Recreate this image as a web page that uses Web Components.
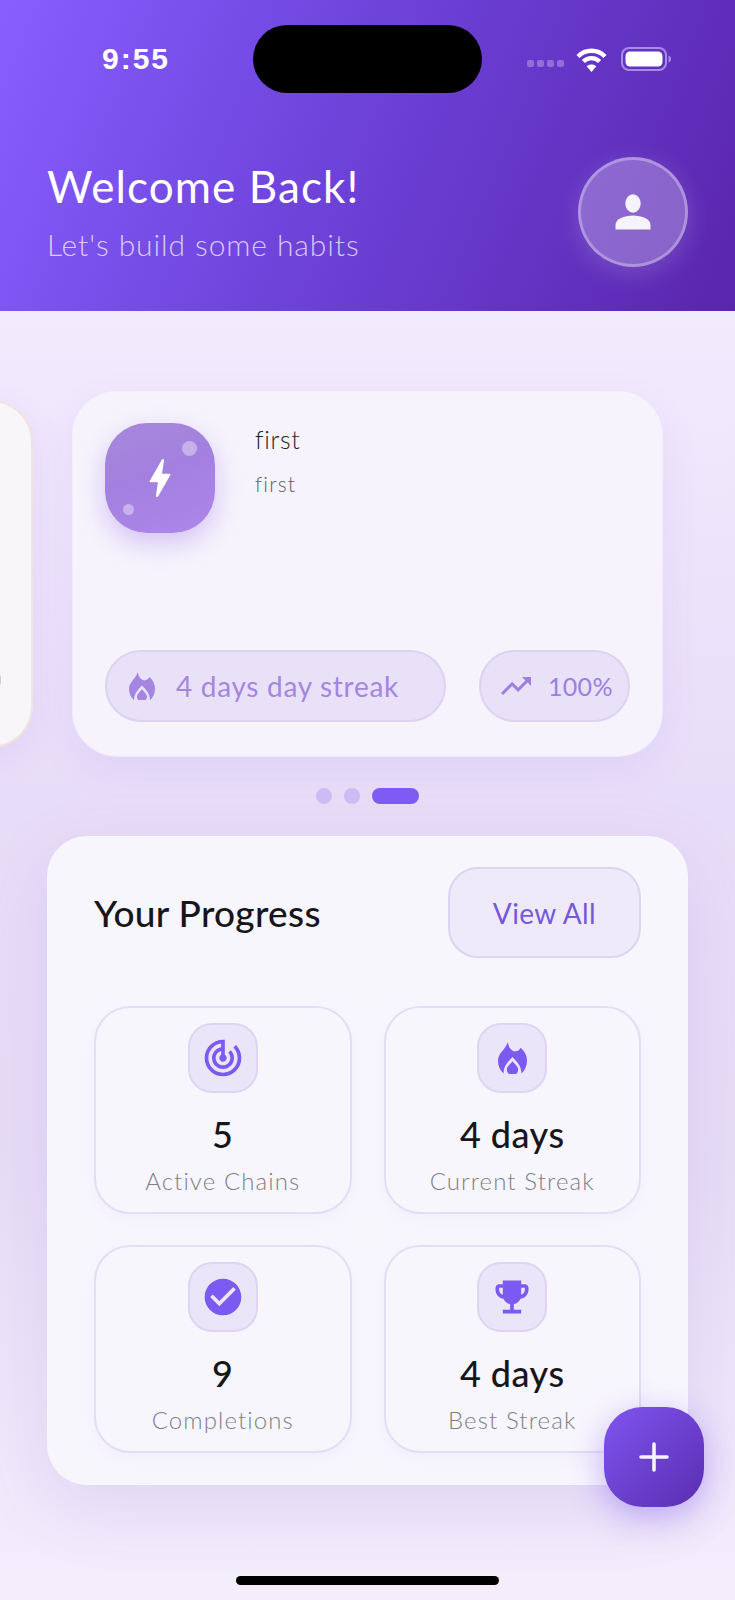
<!DOCTYPE html>
<html lang="en">
<head>
<meta charset="utf-8">
<title>Habits</title>
<style>
	html, body { margin: 0; padding: 0; }
	body { width: 735px; height: 1600px; overflow: hidden; font-family: Lato, "Noto Sans", sans-serif; }
</style>
</head>
<body>
<habit-app>
	<app-header slot="header" title="Welcome Back!" subtitle="Let's build some habits"></app-header>
	<habit-carousel slot="carousel">
		<peek-card></peek-card>
		<habit-card name="first" note="first" streak="4 days day streak" rate="100%"></habit-card>
	</habit-carousel>
	<carousel-dots slot="carousel" count="3" active="2"></carousel-dots>
	<progress-panel slot="panel" heading="Your Progress" action="View All">
		<stat-card icon="target" value="5" label="Active Chains"></stat-card>
		<stat-card icon="fire" value="4 days" label="Current Streak"></stat-card>
		<stat-card icon="check" value="9" label="Completions"></stat-card>
		<stat-card icon="trophy" value="4 days" label="Best Streak"></stat-card>
	</progress-panel>
	<add-button slot="fab"></add-button>
</habit-app>

<script>
/**
 * Icon paths, all on a 24 box except fire which has its own box.
 */
const ICONS = {
	target: 'M19.07 4.93l-1.41 1.41C19.1 7.79 20 9.79 20 12c0 4.42-3.58 8-8 8s-8-3.58-8-8c0-4.08 3.05-7.44 7-7.93v2.02C8.16 6.57 6 9.03 6 12c0 3.31 2.69 6 6 6s6-2.69 6-6c0-1.66-.67-3.16-1.76-4.24l-1.41 1.41C15.55 9.9 16 10.9 16 12c0 2.21-1.79 4-4 4s-4-1.79-4-4c0-1.86 1.28-3.41 3-3.86v2.14c-.6.35-1 .98-1 1.72 0 1.1.9 2 2 2s2-.9 2-2c0-.74-.4-1.38-1-1.72V2h-1C6.48 2 2 6.48 2 12s4.48 10 10 10 10-4.48 10-10c0-2.76-1.12-5.26-2.93-7.07z',
	check: 'M12 2C6.48 2 2 6.48 2 12s4.48 10 10 10 10-4.48 10-10S17.52 2 12 2zm-2 15l-5-5 1.41-1.41L10 14.17l7.59-7.59L19 8l-9 9z',
	trophy: 'M19 5h-2V3H7v2H5c-1.1 0-2 .9-2 2v1c0 2.55 1.92 4.63 4.39 4.94.63 1.5 1.98 2.63 3.61 2.96V19H7v2h10v-2h-4v-3.1c1.63-.33 2.98-1.46 3.61-2.96C19.08 12.63 21 10.55 21 8V7c0-1.1-.9-2-2-2zM5 8V7h2v3.82C5.84 10.4 5 9.3 5 8zm14 0c0 1.3-.84 2.4-2 2.82V7h2v1z',
	trending: 'M16 6l2.29 2.29-4.88 4.88-4-4L2 16.59 3.41 18l6-6 4 4 6.3-6.29L22 12V6z',
	bolt: 'M11 21h-1l1-7H7.5c-.58 0-.57-.32-.38-.66.19-.34.05-.08.07-.12C8.48 10.94 10.42 7.54 13 3h1l-1 7h3.5c.49 0 .56.33.47.51l-.07.15C12.96 17.55 11 21 11 21z'
}

const FIRE = 'M9.500 0C10 5 13 8.500 16 9 18.500 9.300 20.500 8 22 5.500 26 9 28 13.500 28 18 28 23 26 27.500 22.500 30.500 23 24 18.500 19 14 14.500 9.500 19 5 24 5.500 30.500 2 27.500 0 23 0 18 0 11 7 7.500 9.500 0ZM14 18.500C16.500 21.500 19.500 24 19.500 26.500A5.500 5.500 0 0 1 8.500 26.500C8.500 24 11.500 21.500 14 18.500Z'

const icon = (name, size) => {
	if (name === 'fire') {
		return `<svg width="${size}" height="${size * 31 / 28}" viewBox="0 0 28 31" fill="currentColor"><path d="${FIRE}"/></svg>`
	}
	return `<svg width="${size}" height="${size}" viewBox="0 0 24 24" fill="currentColor"><path d="${ICONS[name]}"/></svg>`
}

/**
 * Small base class, sets the shadow root from html().
 */
class Base extends HTMLElement {
	connectedCallback() {
		if (this.shadowRoot) return
		this.attachShadow({ mode: 'open' })
		this.shadowRoot.innerHTML = this.html()
	}

	attr(name) {
		return this.getAttribute(name) || ''
	}
}

class HabitApp extends Base {
	html() {
		return `<style>
			:host { display: block; position: relative; width: 735px; height: 1600px; overflow: hidden;
				background: linear-gradient(180deg, #f2eafd 0, #f2eafd 320px, #e8ddf8 800px, #e7ddf6 1150px, #f3edfc 1590px); }
			.carousel { display: block; padding-top: 81px; }
			.panel { display: block; margin: 32px 47px 0; }
			.home { width: 263px; height: 9px; margin: 91px auto 0; border-radius: 5px; background: #000; }
		</style>
		<slot name="header"></slot>
		<div class="carousel"><slot name="carousel"></slot></div>
		<div class="panel"><slot name="panel"></slot></div>
		<div class="home"></div>
		<slot name="fab"></slot>`
	}
}

class StatusBar extends Base {
	html() {
		return `<style>
			:host { display: flex; align-items: center; height: 68px; }
			.time { width: 253px; box-sizing: border-box; padding-left: 102px; font: 700 30px/34px "Liberation Sans", sans-serif; letter-spacing: 2px; color: #fff; }
			.island { width: 229px; height: 68px; border-radius: 34px; background: #000; }
			.right { display: flex; align-items: center; margin-left: 45px; }
			.cell { display: flex; gap: 3px; margin: 8px 12px 0 0; }
			.cell i { width: 7px; height: 7px; border-radius: 2px; background: rgba(255, 255, 255, .28); }
			.wifi { display: block; margin: 0 14px 0 0; }
			.batt { display: block; }
		</style>
		<div class="time">9:55</div>
		<div class="island"></div>
		<div class="right">
			<div class="cell"><i></i><i></i><i></i><i></i></div>
			<svg class="wifi" width="31" height="25" viewBox="0 0 31 25" fill="none" stroke="#fff" stroke-width="4.4">
				<path d="M2 9.5C9.5 1.8 21.5 1.8 29 9.5"/>
				<path d="M7.4 14.5C12 10 19 10 23.6 14.5"/>
				<path d="M15.5 25L10.6 19.3C13.4 17 17.6 17 20.4 19.3Z" fill="#fff" stroke="none"/>
			</svg>
			<svg class="batt" width="51" height="24" viewBox="0 0 51 24">
				<rect x="1" y="1" width="44" height="22" rx="7" fill="none" stroke="#a78bea" stroke-width="2"/>
				<rect x="4.5" y="4.5" width="37" height="15" rx="4.5" fill="#fff"/>
				<path d="M47.5 8.5c1.8.4 2.5 1.8 2.5 3.5s-.7 3.100-2.500 3.500z" fill="#a88be8"/>
			</svg>
		</div>`
	}
}

class AppHeader extends Base {
	html() {
		return `<style>
			:host { display: block; box-sizing: border-box; height: 311px; padding-top: 25px; color: #fff;
				background: linear-gradient(112deg, #885eff 0%, #6f45dd 42%, #5a25ae 100%); }
			.row { display: flex; justify-content: space-between; align-items: flex-start; margin: 0 47px; padding-top: 64px; }
			h1 { margin: 3px 0 0; font: 400 44px/52px Lato, sans-serif; letter-spacing: 1.100px; }
			p { margin: 13px 0 0; font: 300 30px/38px Lato, sans-serif; letter-spacing: .9px; color: rgba(255, 255, 255, .72); }
			.avatar { display: flex; align-items: center; justify-content: center; box-sizing: border-box; width: 110px; height: 110px; border-radius: 50%;
				background: rgba(255, 255, 255, .27); border: 3.500px solid rgba(255, 255, 255, .3);
				box-shadow: 0 6px 26px rgba(255, 255, 255, .16); }
		</style>
		<status-bar></status-bar>
		<div class="row">
			<div>
				<h1>${this.attr('title')}</h1>
				<p>${this.attr('subtitle')}</p>
			</div>
			<div class="avatar">
				<svg width="36" height="36" viewBox="0 0 36 36" fill="#f6f3fc">
					<ellipse cx="18" cy="9.500" rx="7.700" ry="9.200"/>
					<path d="M0.500 35.500V31C0.500 25 9 21.500 18 21.500S35.500 25 35.500 31V35.500Z"/>
				</svg>
			</div>
		</div>`
	}
}

class HabitCarousel extends Base {
	html() {
		return `<style>
			:host { display: flex; align-items: center; gap: 40px; height: 364px; }
		</style>
		<slot></slot>`
	}
}

class PeekCard extends Base {
	html() {
		return `<style>
			:host { display: block; flex: none; box-sizing: border-box; width: 591px; height: 348px; margin-left: -558px; padding: 270px 30px 0 0;
				border-radius: 42px; background: #f9f6f9; border: 2px solid #f1e3dd;
				box-shadow: 0 10px 34px rgba(124, 92, 240, .1); }
			.tip { width: 12px; height: 16px; margin-left: auto; border-radius: 6px; background: #d8ccc8; }
		</style>
		<div class="tip"></div>`
	}
}

class HabitCard extends Base {
	html() {
		return `<style>
			:host { display: flex; flex-direction: column; justify-content: space-between; flex: none; box-sizing: border-box;
				width: 589px; height: 364px; padding: 31px 32px 34px 32px; border-radius: 44px;
				background: #f6f3fc; box-shadow: 0 14px 40px rgba(124, 92, 240, .09), 0 0 0 1px rgba(255, 255, 255, .6); }
			.top { display: flex; gap: 40px; }
			.badge { position: relative; display: flex; align-items: center; justify-content: center; width: 110px; height: 110px; border-radius: 42px; color: #fff;
				background: linear-gradient(160deg, #a688da 0%, #a380e0 45%, #ad86e9 100%); box-shadow: 0 10px 26px rgba(124, 72, 230, .28); }
			.badge i { position: absolute; border-radius: 50%; background: rgba(255, 255, 255, .38); }
			.d1 { width: 15px; height: 15px; top: 18px; right: 18px; }
			.d2 { width: 11px; height: 11px; bottom: 18px; left: 18px; }
			.name { font: 300 25px/32px Lato, sans-serif; letter-spacing: .7px; color: #1f1f24; }
			.note { margin-top: 15px; font: 300 21px/28px Lato, sans-serif; letter-spacing: 1.200px; color: #5f5e66; }
			.pills { display: flex; gap: 33px; }
			.pill { display: flex; align-items: center; box-sizing: border-box; height: 72px; border-radius: 36px; padding-left: 22px; color: #a486e1;
				background: #e9e1f8; border: 2.500px solid #ddd2f1; font: 400 28px/36px Lato, sans-serif; letter-spacing: .7px; }
			.streak { flex: 1; gap: 21px; }
			.rate { width: 151px; gap: 14px; padding-left: 17px; font-size: 25px; letter-spacing: .3px; color: #9c7fde; }
		</style>
		<div class="top">
			<div class="badge"><i class="d1"></i><i class="d2"></i>${icon('bolt', 50)}</div>
			<div>
				<div class="name">${this.attr('name')}</div>
				<div class="note">${this.attr('note')}</div>
			</div>
		</div>
		<div class="pills">
			<div class="pill streak">${icon('fire', 26)}<span>${this.attr('streak')}</span></div>
			<div class="pill rate">${icon('trending', 36)}<span>${this.attr('rate')}</span></div>
		</div>`
	}
}

class CarouselDots extends Base {
	html() {
		const active = Number(this.attr('active'))
		let dots = ''
		for (let i = 0; i < Number(this.attr('count')); i++) {
			dots += `<i class="${i === active ? 'on' : ''}"></i>`
		}
		return `<style>
			:host { display: flex; justify-content: center; gap: 12px; margin-top: 32px; }
			i { width: 16px; height: 16px; border-radius: 8px; background: #cdbcf3; }
			i.on { width: 47px; background: #7f5af5; }
		</style>${dots}`
	}
}

class ProgressPanel extends Base {
	html() {
		return `<style>
			:host { display: block; box-sizing: border-box; height: 649px; padding: 31px 47px 33px; border-radius: 40px;
				background: #f8f6fd; box-shadow: 0 22px 70px rgba(110, 80, 200, .13); }
			.head { display: flex; justify-content: space-between; align-items: center; }
			h2 { margin: 0; font: 500 37px/44px Lato, sans-serif; letter-spacing: .3px; color: #17171a; }
			.action { display: flex; align-items: center; justify-content: center; box-sizing: border-box; width: 193px; height: 91px; border-radius: 30px;
				background: #efeafa; border: 2.500px solid #dcd4f1; color: #7459d9; font: 400 28px/36px Lato, sans-serif; letter-spacing: .4px; }
			.grid { display: grid; grid-template-columns: 1fr 1fr; gap: 31px 32px; margin-top: 48px; }
		</style>
		<div class="head">
			<h2>${this.attr('heading')}</h2>
			<div class="action">${this.attr('action')}</div>
		</div>
		<div class="grid"><slot></slot></div>`
	}
}

class StatCard extends Base {
	html() {
		const name = this.attr('icon')
		return `<style>
			:host { display: flex; flex-direction: column; align-items: center; box-sizing: border-box; height: 208px; padding-top: 15px;
				border-radius: 36px; border: 2.500px solid #e3ddf6; background: #f8f6fd; box-shadow: 0 6px 18px rgba(124, 92, 240, .05); }
			.box { display: flex; align-items: center; justify-content: center; box-sizing: border-box; width: 70px; height: 70px; border-radius: 24px;
				background: #ebe5fa; border: 2.500px solid #ddd5f2; color: #7a5af0; }
			.value { margin-top: 19px; font: 500 36px/44px Lato, sans-serif; letter-spacing: .5px; color: #17171a; }
			.label { margin-top: 9px; font: 300 24px/32px Lato, sans-serif; letter-spacing: 1.100px; color: #7f7e86; }
		</style>
		<div class="box">${name === 'fire' ? icon('fire', 29) : icon(name, 44)}</div>
		<div class="value">${this.attr('value')}</div>
		<div class="label">${this.attr('label')}</div>`
	}
}

class AddButton extends Base {
	html() {
		return `<style>
			:host { position: absolute; left: 604px; top: 1407px; display: flex; align-items: center; justify-content: center; width: 100px; height: 100px; border-radius: 38px;
				background: linear-gradient(135deg, #7f55f0 0%, #5a2db0 100%); box-shadow: 0 10px 34px rgba(124, 84, 236, .42); }
		</style>
		<svg width="30" height="30" viewBox="0 0 30 30" stroke="#f6f3fc" stroke-width="3.6" stroke-linecap="round"><path d="M15 2V28M2 15H28"/></svg>`
	}
}

customElements.define('habit-app', HabitApp)
customElements.define('status-bar', StatusBar)
customElements.define('app-header', AppHeader)
customElements.define('habit-carousel', HabitCarousel)
customElements.define('peek-card', PeekCard)
customElements.define('habit-card', HabitCard)
customElements.define('carousel-dots', CarouselDots)
customElements.define('progress-panel', ProgressPanel)
customElements.define('stat-card', StatCard)
customElements.define('add-button', AddButton)
</script>
</body>
</html>
